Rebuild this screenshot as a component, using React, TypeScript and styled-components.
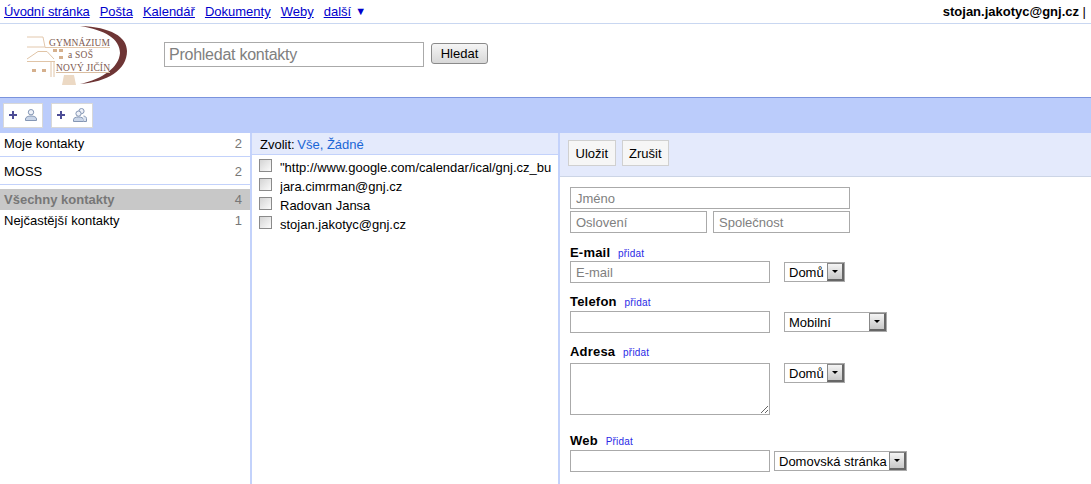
import styled, { createGlobalStyle } from "styled-components";

const GlobalStyle = createGlobalStyle`
  html, body {
    margin: 0;
    padding: 0;
    background: #fff;
    overflow: hidden;
  }
  body {
    font-family: "Liberation Sans", Arial, sans-serif;
    font-size: 13px;
    color: #000;
  }
  * { box-sizing: border-box; }
`;

const navLinks = ["Úvodní stránka", "Pošta", "Kalendář", "Dokumenty", "Weby", "další"];

const groups = [
  { name: "Moje kontakty", count: 2 },
  { name: "MOSS", count: 2 },
];

const contacts = [
  '"http://www.google.com/calendar/ical/gnj.cz_bu',
  "jara.cimrman@gnj.cz",
  "Radovan Jansa",
  "stojan.jakotyc@gnj.cz",
];

const Logo = () => (
  <svg width="102" height="62" viewBox="0 0 102 62">
    <path d="M53 0 C84 1 100 11 100 25 C100 44 80 56 53 58 C76 53 92 41 93 27 C93 13 78 4 53 0Z" fill="#6e3535" />
    <path d="M0 11H16L18 21H0M18 21.500H83" fill="none" stroke="#e3c8ad" strokeWidth="1" />
    <path d="M0 33L11 25.500H20L27 33M0 35.500H28M24 36V51M27 36V51" fill="none" stroke="#e0c4a6" strokeWidth="1" />
    <path d="M26 23h4v3h-4zM32 23h4v3h-4zM32 30h4v3h-4zM5 43h4v3H5zM15 43h4v3h-4z" fill="#d5b08d" />
    <path d="M35 59L37 49H47L49 59Z" fill="#ecd9c4" />
    <path d="M29 46.500H83" stroke="#d9bda0" strokeWidth="1" />
    <LogoText x="22" y="20" fontSize="9.500" textLength="61">GYMNÁZIUM</LogoText>
    <LogoText x="41" y="32" fontSize="9.500" textLength="25">a SOŠ</LogoText>
    <LogoText x="29" y="45" fontSize="9.500" textLength="54">NOVÝ JIČÍN</LogoText>
  </svg>
);

const PlusIcon = () => (
  <svg width="8" height="8" viewBox="0 0 8 8">
    <path d="M3 0h2v3h3v2H5v3H3V5H0V3h3z" fill="#4d4d96" />
  </svg>
);

const PersonIcon = () => (
  <svg width="12" height="12" viewBox="0 0 12 12">
    <circle cx="6" cy="3.200" r="2.700" fill="#eef1f8" stroke="#8496b4" />
    <path d="M.5 11.500V10C.5 8 3 7 6 7s5.500 1 5.500 3v1.500z" fill="#c9d5e8" stroke="#8496b4" />
  </svg>
);

const PeopleIcon = () => (
  <svg width="14" height="14" viewBox="0 0 14 14">
    <circle cx="8.500" cy="3.100" r="2.600" fill="#eef1f8" stroke="#8496b4" />
    <circle cx="5.500" cy="5.600" r="2.600" fill="#eef1f8" stroke="#8496b4" />
    <path d="M.5 13.500V11.500C.5 9.800 3 9 5.500 9s5 .8 5 2.500v2z" fill="#c9d5e8" stroke="#8496b4" />
    <path d="M10.500 8c1.500.3 3 1 3 2.500v3h-3" fill="#dbe3f0" stroke="#8496b4" />
  </svg>
);

const Dropdown = ({ label, width }: { label: string; width: number }) => (
  <FakeSelect $width={width}>
    <SelectValue>{label}</SelectValue>
    <SelectArrow />
  </FakeSelect>
);

export default function App() {
  return (
    <>
      <GlobalStyle />
      <TopBar>
        <Nav>
          {navLinks.map((link) => (
            <NavLink key={link} href="#">
              {link}
            </NavLink>
          ))}
          <NavCaret>▼</NavCaret>
        </Nav>
        <UserBox>
          <b>stojan.jakotyc@gnj.cz</b> |
        </UserBox>
      </TopBar>

      <Header>
        <LogoBox>
          <Logo />
        </LogoBox>
        <SearchInput placeholder="Prohledat kontakty" />
        <SearchButton>Hledat</SearchButton>
      </Header>

      <Toolbar>
        <AddButton $width={40}>
          <PlusIcon />
          <PersonIcon />
        </AddButton>
        <AddButton $width={42}>
          <PlusIcon />
          <PeopleIcon />
        </AddButton>
      </Toolbar>

      <Columns>
        <GroupColumn>
          {groups.map((g) => (
            <GroupRow key={g.name}>
              <span>{g.name}</span>
              <Count>{g.count}</Count>
            </GroupRow>
          ))}
          <ActiveRow>
            <span>Všechny kontakty</span>
            <Count>4</Count>
          </ActiveRow>
          <PlainRow>
            <span>Nejčastější kontakty</span>
            <Count>1</Count>
          </PlainRow>
        </GroupColumn>

        <ListColumn>
          <ListHead>
            Zvolit: <BlueLink>Vše, Žádné</BlueLink>
          </ListHead>
          <ContactList>
            {contacts.map((c) => (
              <ContactRow key={c}>
                <Check />
                <ContactName>{c}</ContactName>
              </ContactRow>
            ))}
          </ContactList>
        </ListColumn>

        <DetailColumn>
          <DetailHead>
            <ActionButton>Uložit</ActionButton>
            <ActionButton>Zrušit</ActionButton>
          </DetailHead>
          <Form>
            <Field $width={280} placeholder="Jméno" />
            <NameRow>
              <Field $width={137} placeholder="Oslovení" />
              <Field $width={137} placeholder="Společnost" />
            </NameRow>

            <SectionLabel $top={10} $bottom={0}>
              E-mail <AddLink>přidat</AddLink>
            </SectionLabel>
            <InputRow $gap={14}>
              <Field $width={200} placeholder="E-mail" />
              <Dropdown label="Domů" width={61} />
            </InputRow>

            <SectionLabel $top={9} $bottom={1}>
              Telefon <AddLink>přidat</AddLink>
            </SectionLabel>
            <InputRow $gap={14}>
              <Field $width={200} />
              <Dropdown label="Mobilní" width={103} />
            </InputRow>

            <SectionLabel $top={9} $bottom={3}>
              Adresa <AddLink>přidat</AddLink>
            </SectionLabel>
            <AddressRow>
              <AddressBox />
              <Dropdown label="Domů" width={61} />
            </AddressRow>

            <SectionLabel $top={16} $bottom={1}>
              Web <AddLink>Přidat</AddLink>
            </SectionLabel>
            <InputRow $gap={4}>
              <Field $width={200} />
              <Dropdown label="Domovská stránka" width={133} />
            </InputRow>
          </Form>
        </DetailColumn>
      </Columns>
    </>
  );
}

const TopBar = styled.div`
  height: 24px;
  display: flex;
  justify-content: space-between;
  align-items: flex-start;
  padding: 4px 5px 0 4px;
  border-bottom: 1px solid #c9d7f1;
`;

const Nav = styled.nav`
  display: flex;
  align-items: center;
  gap: 10px;
  line-height: 15px;
`;

const NavLink = styled.a`
  color: #0000cc;
  text-decoration: underline;
  &:first-child {
    letter-spacing: -0.13px;
  }
`;

const NavCaret = styled.span`
  color: #0000cc;
  font-size: 11px;
  margin-left: -6px;
`;

const UserBox = styled.div`
  line-height: 15px;
`;

const Header = styled.div`
  height: 73px;
  display: flex;
  align-items: flex-start;
`;

const LogoBox = styled.div`
  width: 164px;
  padding: 2px 0 0 27px;
  height: 64px;
`;

const LogoText = styled.text`
  font-family: "Liberation Serif", serif;
  fill: #7d5a50;
`;

const SearchInput = styled.input`
  width: 260px;
  height: 25px;
  margin-top: 18px;
  padding: 0 4px;
  border: 1px solid #aaa;
  font: 16px "Liberation Sans", Arial, sans-serif;
  letter-spacing: -0.25px;
  outline: none;
  &::placeholder {
    color: #808080;
    opacity: 1;
  }
`;

const SearchButton = styled.button`
  width: 57px;
  height: 21px;
  margin: 19px 0 0 7px;
  padding: 0;
  border: 1px solid #8a8a8a;
  border-radius: 3px;
  background: linear-gradient(#f5f5f5, #d8d8d8);
  font: 13px "Liberation Sans", Arial, sans-serif;
  color: #000;
`;

const Toolbar = styled.div`
  height: 36px;
  display: flex;
  align-items: flex-start;
  gap: 8px;
  padding: 5px 0 0 3px;
  background: #bbccfb;
  border-top: 1px solid #7b93dd;
`;

const AddButton = styled.div<{ $width: number }>`
  width: ${(p) => p.$width}px;
  height: 25px;
  display: flex;
  align-items: center;
  gap: 8px;
  padding: 0 0 2px 5px;
  background: #fff;
  border: 1px solid #d8d8d8;
`;

const Columns = styled.div`
  height: 351px;
  display: flex;
  overflow: hidden;
`;

const GroupColumn = styled.div`
  width: 252px;
  flex: none;
  border-right: 2px solid #c3d2fb;
`;

const GroupRow = styled.div`
  display: flex;
  justify-content: space-between;
  align-items: center;
  padding: 0 8px 2px 4px;
  height: 24px;
  border-bottom: 1px solid #c3d2fb;
  & + & {
    height: 28px;
    padding: 1px 8px 0 4px;
  }
`;

const PlainRow = styled.div`
  display: flex;
  justify-content: space-between;
  align-items: center;
  padding: 0 8px 0 4px;
  height: 21px;
`;

const ActiveRow = styled(PlainRow)`
  margin-top: 4px;
  background: #c8c8c8;
  color: #777;
  font-weight: bold;
`;

const Count = styled.span`
  color: #777;
  font-weight: normal;
`;

const ListColumn = styled.div`
  width: 308px;
  flex: none;
  border-right: 2px solid #c3d2fb;
`;

const ListHead = styled.div`
  height: 22px;
  padding: 4px 0 0 8px;
  line-height: 16px;
  background: #e4eafc;
  border-bottom: 1px solid #c3d2fb;
`;

const BlueLink = styled.span`
  color: #1a66d6;
  margin-left: -1px;
`;

const ContactList = styled.div`
  padding-top: 3px;
`;

const ContactRow = styled.div`
  height: 19px;
  display: flex;
  align-items: center;
  padding-left: 7px;
  gap: 8px;
`;

const Check = styled.span`
  width: 13px;
  height: 13px;
  flex: none;
  margin-top: -5px;
  border: 1px solid #8a8a8a;
  background: linear-gradient(135deg, #d4d4d4, #fbfbfb);
`;

const ContactName = styled.span`
  width: 274px;
  white-space: nowrap;
  overflow: hidden;
`;

const DetailColumn = styled.div`
  flex: 1;
  min-width: 0;
`;

const DetailHead = styled.div`
  height: 44px;
  display: flex;
  align-items: flex-start;
  gap: 6px;
  padding: 7px 0 0 8px;
  background: #e4eafc;
  border-bottom: 1px solid #ccd5e6;
`;

const ActionButton = styled.div`
  height: 26px;
  padding: 0 6.5px;
  line-height: 26px;
  background: #f6f6f6;
  border: 1px solid #d0d0d0;
`;

const Form = styled.div`
  padding: 10px 0 0 10px;
`;

const Field = styled.input<{ $width: number }>`
  display: block;
  width: ${(p) => p.$width}px;
  height: 22px;
  padding: 0 5px;
  border: 1px solid #aaa;
  font: 13px "Liberation Sans", Arial, sans-serif;
  outline: none;
  &::placeholder {
    color: #808080;
    opacity: 1;
  }
`;

const NameRow = styled.div`
  display: flex;
  gap: 6px;
  width: 280px;
  margin-top: 2px;
`;

const SectionLabel = styled.div<{ $top: number; $bottom: number }>`
  margin: ${(p) => p.$top}px 0 ${(p) => p.$bottom}px;
  height: 18px;
  line-height: 20px;
  font-weight: bold;
  letter-spacing: 0.2px;
`;

const AddLink = styled.span`
  margin-left: 4px;
  color: #2a2ae6;
  font-size: 10px;
  font-weight: normal;
  letter-spacing: 0.2px;
`;

const InputRow = styled.div<{ $gap: number }>`
  display: flex;
  align-items: center;
  gap: ${(p) => p.$gap}px;
`;

const AddressRow = styled.div`
  display: flex;
  align-items: flex-start;
  gap: 14px;
`;

const AddressBox = styled.textarea`
  width: 200px;
  height: 52px;
  display: block;
  border: 1px solid #aaa;
  outline: none;
`;

const FakeSelect = styled.div<{ $width: number }>`
  width: ${(p) => p.$width}px;
  height: 20px;
  display: flex;
  align-items: center;
  justify-content: space-between;
  background: #fff;
  border: 1px solid #aaa;
`;

const SelectValue = styled.span`
  padding-left: 4px;
  white-space: nowrap;
`;

const SelectArrow = styled.span`
  position: relative;
  width: 17px;
  height: 18px;
  flex: none;
  background: linear-gradient(#f4f4f4, #c8c8c8);
  border: 1px solid #888;
  border-right: 2px solid #666;
  border-bottom: 2px solid #666;
  &::after {
    content: "";
    position: absolute;
    left: 4px;
    top: 6px;
    border: 3.5px solid transparent;
    border-top-color: #000;
    border-bottom: 0;
  }
`;
